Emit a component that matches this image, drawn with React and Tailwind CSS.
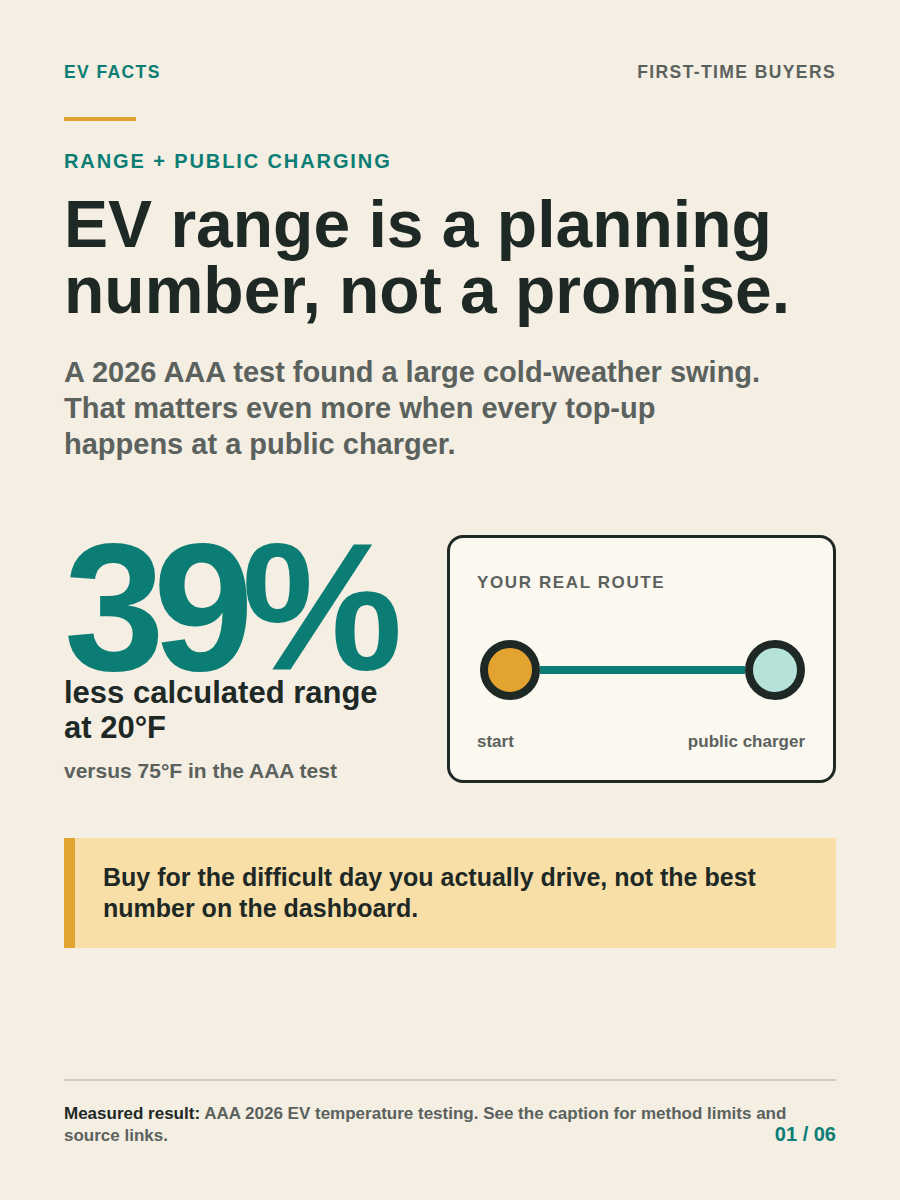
import React from 'react';

const App = () => {
  return (
    <div
      className="min-h-[1200px] w-[900px] bg-[#f4eee3] px-16 pt-[60px] pb-[53px] flex flex-col text-[#1e2926]"
      style={{ fontFamily: '"Liberation Sans", Arial, sans-serif' }}
    >
      {/* Top bar */}
      <div className="flex items-center justify-between font-bold text-[17.5px] tracking-[0.08em] leading-6">
        <span className="text-[#0b7d74]">EV FACTS</span>
        <span className="text-[#5b625e]">FIRST-TIME BUYERS</span>
      </div>

      <div className="mt-[33px] h-1 w-[72px] bg-[#e3a330]" />

      <p className="mt-[28px] text-[20px] font-bold tracking-[0.095em] text-[#0b7d74] leading-6">
        RANGE + PUBLIC CHARGING
      </p>

      <h1 className="mt-[18px] text-[66px] font-bold leading-[66px]">
        EV range is a planning
        <br />
        number, not a promise.
      </h1>

      <p className="mt-[31px] max-w-[705px] text-[29px] font-bold leading-[36px] text-[#5b625e]">
        A 2026 AAA test found a large cold-weather swing. That matters even more when every top-up
        happens at a public charger.
      </p>

      {/* Stat + route */}
      <div className="mt-[73px] flex items-start justify-between">
        <div className="w-[350px]">
          <div className="text-[181px] font-bold leading-[0.8] tracking-[-0.065em] text-[#0b7d74]">
            39%
          </div>
          <p className="-mt-[5px] text-[31px] font-bold leading-[35px]">
            less calculated range
            <br />
            at 20°F
          </p>
          <p className="mt-[14px] text-[21px] font-bold text-[#5b625e] leading-6">
            versus 75°F in the AAA test
          </p>
        </div>

        <div className="w-[389px] h-[248px] rounded-2xl border-[3px] border-[#1e2926] bg-[#fbf8f0] pl-[27px] pr-[28px] pt-[33px] flex flex-col">
          <p className="text-[17px] font-bold tracking-[0.095em] text-[#5b625e] leading-6">
            YOUR REAL ROUTE
          </p>
          <div className="mt-[45px] flex items-center pl-[3px]">
            <div className="h-[60px] w-[60px] shrink-0 rounded-full border-[8px] border-[#1e2926] bg-[#e3a330]" />
            <div className="h-2 flex-1 bg-[#0b7d74]" />
            <div className="h-[60px] w-[60px] shrink-0 rounded-full border-[8px] border-[#1e2926] bg-[#b5e3d9]" />
          </div>
          <div className="mt-[30px] flex justify-between text-[17px] font-bold text-[#5b625e] leading-6">
            <span>start</span>
            <span>public charger</span>
          </div>
        </div>
      </div>

      {/* Callout */}
      <div className="mt-[55px] flex bg-[#f8dfa8]">
        <div className="w-[11px] shrink-0 bg-[#e3a330]" />
        <p className="py-[24px] pl-[28px] pr-[40px] text-[25px] font-bold leading-[31px]">
          Buy for the difficult day you actually drive, not the best number on the dashboard.
        </p>
      </div>

      {/* Footer */}
      <div className="mt-auto">
        <div className="h-[2px] bg-[#d3cec5]" />
        <div className="relative mt-[22px]">
          <p className="max-w-[740px] text-[17px] font-bold leading-[22px] text-[#5b625e]">
            <span className="text-[#1e2926]">Measured result:</span> AAA 2026 EV temperature
            testing. See the caption for method limits and source links.
          </p>
          <span className="absolute right-0 bottom-[1px] text-[20px] font-bold text-[#0b7d74] leading-6">
            01 / 06
          </span>
        </div>
      </div>
    </div>
  );
};

export default App;
